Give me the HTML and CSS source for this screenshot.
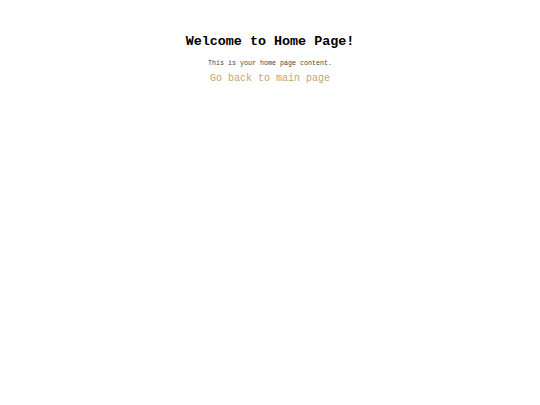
FILE: index.html
```html
<!DOCTYPE html>
<html>
<head>
<meta charset="utf-8">
<link rel="stylesheet" href="styles.css">
</head>
<body>
<div class="home">
  <h1 class="title">Welcome to Home Page!</h1>
  <p class="content">This is your home page content.</p>
  <a class="back" href="#">Go back to main page</a>
</div>
</body>
</html>
```
FILE: styles.css
```css
body {
  margin: 0;
  background: #fff;
  font-family: "Liberation Mono", "Courier New", monospace;
}
.home {
  display: flex;
  flex-direction: column;
  align-items: center;
  padding-top: 34px;
}
.title {
  margin: 0;
  font-size: 13.4px;
  font-weight: bold;
  color: #000;
  line-height: 16px;
}
.content {
  margin: 9px 0 0 0;
  font-size: 6.67px;
  color: #444;
  line-height: 8px;
}
.back {
  margin-top: 6px;
  font-size: 10px;
  line-height: 12px;
  color: #c4a46e;
  text-decoration: none;
}
```
